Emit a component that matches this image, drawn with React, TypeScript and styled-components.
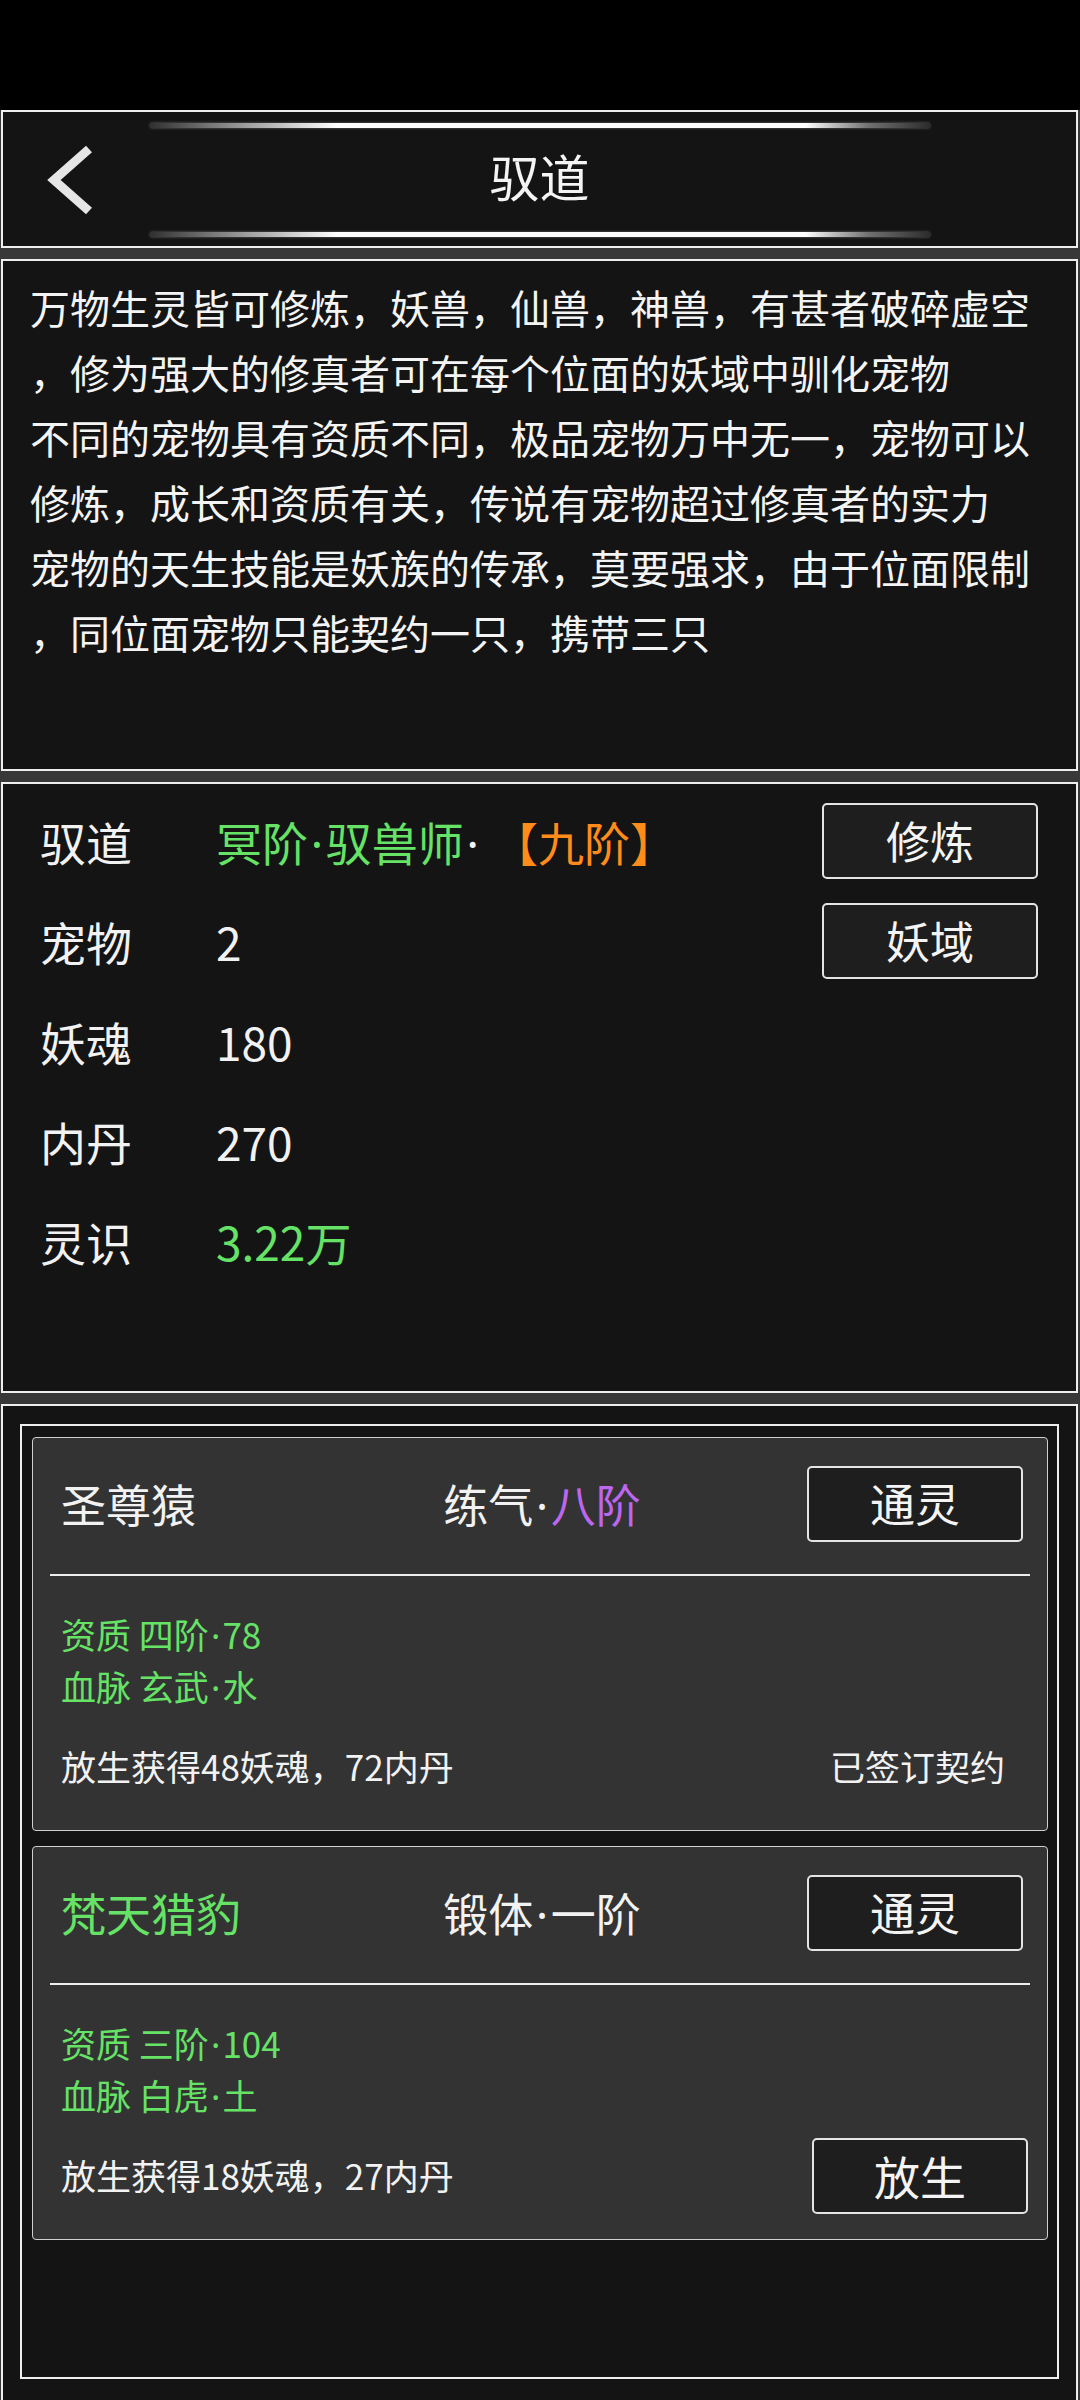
import styled, { createGlobalStyle } from "styled-components";

const GREEN = "#66e266";
const ORANGE = "#ff8c1a";
const PURPLE = "#bd66ee";

const GlobalStyle = createGlobalStyle`
  html, body {
    margin: 0;
    padding: 0;
    background: #000;
  }
  body {
    font-family: "Noto Sans CJK SC", "Noto Sans", sans-serif;
    color: #f2f2f2;
  }
  * {
    box-sizing: border-box;
  }
`;

const Screen = styled.div`
  width: 1080px;
  height: 2400px;
  display: flex;
  flex-direction: column;
  background: #383838;
  overflow: hidden;
`;

const StatusBar = styled.div`
  height: 110px;
  flex-shrink: 0;
  background: #000;
`;

const Stack = styled.div`
  flex: 1;
  display: flex;
  flex-direction: column;
  gap: 11px;
`;

const Panel = styled.section`
  background: #141414;
  border: 2px solid #eeeeee;
  margin: 0 2px 0 1px;
  flex-shrink: 0;
`;

const HeaderBar = styled(Panel)`
  height: 138px;
  display: flex;
  flex-direction: column;
  padding: 11px 0 9px;
`;

const GlowLine = styled.div`
  width: 780px;
  height: 5px;
  margin-left: 147px;
  border-radius: 3px;
  background: linear-gradient(
    90deg,
    rgba(255, 255, 255, 0.12) 0%,
    rgba(255, 255, 255, 0.5) 10%,
    #ffffff 24%,
    #ffffff 84%,
    rgba(255, 255, 255, 0.4) 92%,
    rgba(255, 255, 255, 0.1) 100%
  );
  box-shadow: 0 0 3px rgba(255, 255, 255, 0.35);
`;

const HeaderRow = styled.div`
  flex: 1;
  display: grid;
  grid-template-columns: 1fr auto 1fr;
  align-items: center;
`;

const BackButton = styled.div`
  padding-left: 41px;
  display: flex;
  align-items: center;
`;

const Title = styled.h1`
  margin: 0 0 10px;
  font-size: 50px;
  font-weight: 400;
  line-height: 1;
  color: #f4f4f4;
`;

const Intro = styled(Panel)`
  height: 512px;
  padding: 14px 0 0 27px;
  font-size: 40px;
  line-height: 65px;
  color: #f4f4f4;
`;

const IntroLine = styled.div`
  white-space: nowrap;
`;

const StatsPanel = styled(Panel)`
  height: 611px;
  padding: 7px 38px 0 37px;
`;

const StatRow = styled.div`
  height: 100px;
  display: flex;
  align-items: center;
  font-size: 46px;
  line-height: 1;
`;

const StatLabel = styled.span`
  width: 176px;
  flex-shrink: 0;
`;

const StatValue = styled.span<{ $color?: string }>`
  flex: 1;
  white-space: nowrap;
  color: ${({ $color }) => $color || "#f2f2f2"};
`;

const Tint = styled.span<{ $color: string }>`
  color: ${({ $color }) => $color};
`;

/* the CJK face draws U+00B7 full width; the reference uses the narrow latin dot */
const Dot = styled.span`
  font-family: "Noto Sans", "DejaVu Sans", sans-serif;
  padding: 0 0.06em;
  line-height: 0;
`;

const OutlineButton = styled.button`
  width: 216px;
  height: 76px;
  padding: 0 0 3px;
  display: flex;
  align-items: center;
  justify-content: center;
  background: #1e1e1e;
  border: 2px solid #e4e4e4;
  border-radius: 5px;
  color: #f4f4f4;
  font-family: inherit;
  font-size: 44px;
  line-height: 1;
`;

const PetsPanel = styled(Panel)`
  flex: 1;
  border-bottom: none;
  padding: 18px 17px 21px;
  display: flex;
`;

const PetsFrame = styled.div`
  flex: 1;
  border: 2px solid #eeeeee;
  padding: 11px 9px 0 10px;
  display: flex;
  flex-direction: column;
  gap: 15px;
`;

const PetCard = styled.div`
  background: #333333;
  border: 1px solid #cfcfcf;
  border-radius: 4px;
  padding-bottom: 25px;
`;

const CardHead = styled.div`
  height: 136px;
  display: grid;
  grid-template-columns: 1fr auto 1fr;
  align-items: center;
  padding: 0 24px 5px 28px;
  font-size: 45px;
  line-height: 1;
`;

const PetName = styled.span<{ $color: string }>`
  justify-self: start;
  color: ${({ $color }) => $color};
`;

const PetRealm = styled.span`
  white-space: nowrap;
`;

const HeadButton = styled(OutlineButton)`
  justify-self: end;
  font-size: 45px;
`;

const Divider = styled.div`
  height: 2px;
  margin: 0 17px;
  background: #eeeeee;
`;

const Traits = styled.div`
  margin-top: 32px;
  padding-left: 28px;
  font-size: 35px;
  color: ${GREEN};
`;

const TraitLine = styled.div`
  height: 52px;
  line-height: 52px;
  white-space: nowrap;
`;

const CardFoot = styled.div`
  margin-top: 17px;
  height: 76px;
  display: flex;
  align-items: center;
  justify-content: space-between;
  padding: 0 19px 0 28px;
  font-size: 35px;
  line-height: 1;
`;

const Reward = styled.span`
  padding-bottom: 4px;
`;

const Signed = styled.span`
  margin-right: 23px;
  padding-bottom: 4px;
`;

const FootButton = styled(OutlineButton)`
  font-size: 46px;
`;

const introLines = [
  "万物生灵皆可修炼，妖兽，仙兽，神兽，有甚者破碎虚空",
  "，修为强大的修真者可在每个位面的妖域中驯化宠物",
  "不同的宠物具有资质不同，极品宠物万中无一，宠物可以",
  "修炼，成长和资质有关，传说有宠物超过修真者的实力",
  "宠物的天生技能是妖族的传承，莫要强求，由于位面限制",
  "，同位面宠物只能契约一只，携带三只",
];

interface Pet {
  name: string;
  nameColor: string;
  realm: string;
  stage: string;
  stageColor: string;
  aptitude: string;
  bloodline: string;
  reward: string;
  signed: boolean;
}

const pets: Pet[] = [
  {
    name: "圣尊猿",
    nameColor: "#f2f2f2",
    realm: "练气·",
    stage: "八阶",
    stageColor: PURPLE,
    aptitude: "资质 四阶·78",
    bloodline: "血脉 玄武·水",
    reward: "放生获得48妖魂，72内丹",
    signed: true,
  },
  {
    name: "梵天猎豹",
    nameColor: GREEN,
    realm: "锻体·",
    stage: "一阶",
    stageColor: "#f2f2f2",
    aptitude: "资质 三阶·104",
    bloodline: "血脉 白虎·土",
    reward: "放生获得18妖魂，27内丹",
    signed: false,
  },
];

// splits a label on "·" so the dot can be drawn with the narrow glyph
const Dotted = ({ text }: { text: string }) => {
  const parts = text.split("·");
  return (
    <>
      {parts.map((part, i) => (
        <span key={i}>
          {part}
          {i < parts.length - 1 && <Dot>·</Dot>}
        </span>
      ))}
    </>
  );
};

const BackIcon = () => (
  <svg width="56" height="80" viewBox="0 0 56 80">
    <polyline
      points="45,9 10,40 45,71"
      fill="none"
      stroke="#e6e6e6"
      strokeWidth="9"
      strokeLinejoin="miter"
      strokeLinecap="butt"
    />
  </svg>
);

const PetItem = ({ pet }: { pet: Pet }) => (
  <PetCard>
    <CardHead>
      <PetName $color={pet.nameColor}>{pet.name}</PetName>
      <PetRealm>
        <Dotted text={pet.realm} />
        <Tint $color={pet.stageColor}>{pet.stage}</Tint>
      </PetRealm>
      <HeadButton>通灵</HeadButton>
    </CardHead>
    <Divider />
    <Traits>
      <TraitLine>
        <Dotted text={pet.aptitude} />
      </TraitLine>
      <TraitLine>
        <Dotted text={pet.bloodline} />
      </TraitLine>
    </Traits>
    <CardFoot>
      <Reward>{pet.reward}</Reward>
      {pet.signed ? <Signed>已签订契约</Signed> : <FootButton>放生</FootButton>}
    </CardFoot>
  </PetCard>
);

export default function App() {
  return (
    <>
      <GlobalStyle />
      <Screen>
        <StatusBar />
        <Stack>
          <HeaderBar>
            <GlowLine />
            <HeaderRow>
              <BackButton>
                <BackIcon />
              </BackButton>
              <Title>驭道</Title>
              <span />
            </HeaderRow>
            <GlowLine />
          </HeaderBar>

          <Intro>
            {introLines.map((line, i) => (
              <IntroLine key={i}>{line}</IntroLine>
            ))}
          </Intro>

          <StatsPanel>
            <StatRow>
              <StatLabel>驭道</StatLabel>
              <StatValue $color={GREEN}>
                <Dotted text="冥阶·驭兽师" />
                <Tint $color="#f2f2f2">
                  <Dot>·</Dot>
                </Tint>
                <Tint $color={ORANGE}> 【九阶】</Tint>
              </StatValue>
              <OutlineButton>修炼</OutlineButton>
            </StatRow>
            <StatRow>
              <StatLabel>宠物</StatLabel>
              <StatValue>2</StatValue>
              <OutlineButton>妖域</OutlineButton>
            </StatRow>
            <StatRow>
              <StatLabel>妖魂</StatLabel>
              <StatValue>180</StatValue>
            </StatRow>
            <StatRow>
              <StatLabel>内丹</StatLabel>
              <StatValue>270</StatValue>
            </StatRow>
            <StatRow>
              <StatLabel>灵识</StatLabel>
              <StatValue $color={GREEN}>3.22万</StatValue>
            </StatRow>
          </StatsPanel>

          <PetsPanel>
            <PetsFrame>
              {pets.map((pet) => (
                <PetItem key={pet.name} pet={pet} />
              ))}
            </PetsFrame>
          </PetsPanel>
        </Stack>
      </Screen>
    </>
  );
}
